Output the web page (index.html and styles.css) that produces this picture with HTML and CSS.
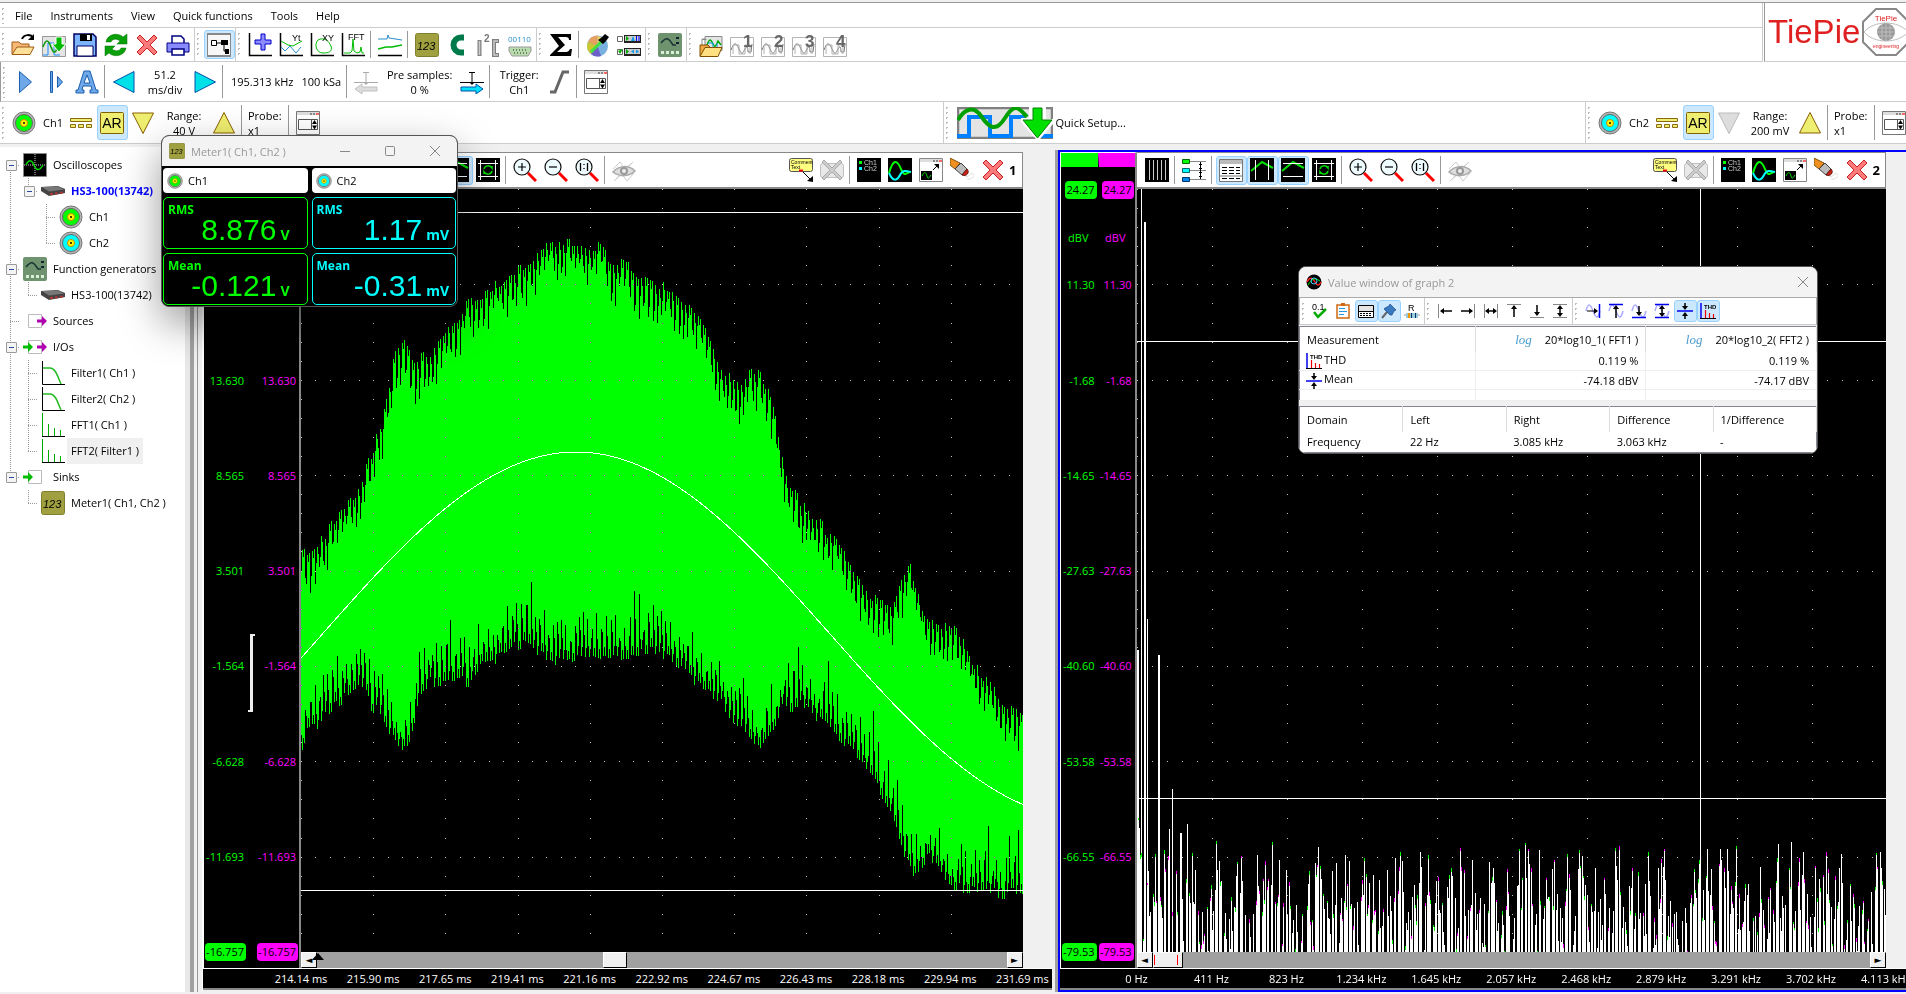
FILE: index.html
```html
<!DOCTYPE html>
<html lang="en">

<head>
    <meta charset="UTF-8">
    <meta name="viewport" content="width=device-width, initial-scale=1.0">
    <title>Multi Channel</title>
    <link rel="stylesheet" href="styles.css">
</head>

<body>
    <!-- icon set -->
    <svg class="defs" aria-hidden="true">
        <symbol id="open" viewBox="0 0 24 24">
            <path d="M1 21V9h7l2 2h8v4" fill="#f8b878" stroke="#a05a10" />
            <path d="M1 21.500L6 14h17l-4 7.500z" fill="#fde09a" stroke="#a05a10" />
            <path d="M11 6c2-5 9-5 11-1" fill="none" stroke="#000" stroke-width="2" />
            <path d="M23 1v6h-6z" />
        </symbol>
        <symbol id="quick" viewBox="0 0 24 24">
            <path d="M.5 3.500h23v20H.5z" fill="#e4e4e4" stroke="#999" />
            <path d="M1 22h5V10h6v12h6" fill="none" stroke="#1a8cff" />
            <path d="M1 14c3-8 5-8 8 0s5 6 7-2" fill="none" stroke="#0a9a0a" stroke-width="1.500" />
            <path d="M14 4h6v7h4l-7 8-7-8h4z" fill="#0b0" stroke="#fff" />
        </symbol>
        <symbol id="save" viewBox="0 0 24 24">
            <path d="M1 1h19l3 3v19H1z" fill="#7cb4ff" stroke="#000060" stroke-width="1.500" />
            <path d="M7 1h12v7H7z" />
            <path d="M14 2h3v5h-3z" fill="#fff" />
            <path d="M4 13h16v10H4z" fill="#fff" stroke="#000060" />
        </symbol>
        <symbol id="refresh" viewBox="0 0 24 24">
            <path d="M2 9c1-8 12-10 17-5l4-3v10H13l3-3c-4-3-8-2-9 1zM22 15c-1 8-12 10-17 5l-4 3V13h10l-3 3c4 3 8 2 9-1z" fill="#0aa00a" stroke="#087008" stroke-width=".500" />
        </symbol>
        <symbol id="cross" viewBox="0 0 24 24">
            <path d="M2 5l3-3 7 7 7-7 3 3-7 7 7 7-3 3-7-7-7 7-3-3 7-7z" fill="#ff7a7a" stroke="#c82020" />
        </symbol>
        <symbol id="print" viewBox="0 0 24 24">
            <path d="M6 10V3h9l3 3v4" fill="#fff" stroke="#000080" stroke-width="1.500" />
            <path d="M1 10h22v9H1z" fill="#8a8aff" stroke="#000080" />
            <path d="M6 16h12v6H6z" fill="#fff" stroke="#000080" stroke-width="1.500" />
        </symbol>
        <symbol id="objtree" viewBox="0 0 24 24">
            <path d="M0 1h24v22H0z" fill="#f7f7f7" stroke="#888" stroke-width="2" />
            <path d="M4.500 7.500h5v5h-5z" fill="#fff" stroke="#000" />
            <path d="M10 10h8M17 10v8h2" fill="none" stroke="#000" />
            <path d="M14 7h7v5h-7zM18 16h4v5h-4z" />
        </symbol>
        <symbol id="newgraph" viewBox="0 0 24 24">
            <path d="M1.500 0v22.500H24" fill="none" stroke="#000" stroke-width="1.500" />
            <path d="M13 1h4v6h6v4h-6v6h-4v-6H7V7h6z" fill="#8c8cff" stroke="#0000c8" />
        </symbol>
        <symbol id="yt" viewBox="0 0 24 24">
            <path d="M1.500 0v22.500H24" fill="none" stroke="#000" stroke-width="1.500" />
            <path d="M2 8l7 4 5 1 9-5" fill="none" stroke="#0b0" />
            <path d="M2 14l4 4 5-5 6 7 5-6" fill="none" stroke="#2a8fd0" />
            <text x="13" y="8" class="ic-mono">Yt</text>
        </symbol>
        <symbol id="xy" viewBox="0 0 24 24">
            <path d="M1.500 0v22.500H24" fill="none" stroke="#000" stroke-width="1.500" />
            <path d="M8 7c6-3 10 0 13 6 2 6-3 7-8 7-7 0-9-9-5-13z" fill="none" stroke="#0b0" />
            <text x="12" y="8" class="ic-mono">XY</text>
        </symbol>
        <symbol id="fftplus" viewBox="0 0 24 24">
            <path d="M1.500 0v22.500H24" fill="none" stroke="#000" stroke-width="1.500" />
            <path d="M3 20h6l2-2 1-12 1 12 3 2 3-1 1-5 1 6h2" fill="none" stroke="#0b0" />
            <text x="7" y="7" class="ic-mono">FFT</text>
        </symbol>
        <symbol id="compare" viewBox="0 0 24 24">
            <path d="M0 22.500h24" stroke="#000" stroke-width="1.500" />
            <path d="M0 6h9l1-4 1 3 13 2" fill="none" stroke="#2a8fd0" />
            <path d="M0 16l8-2 6 0 10-2" fill="none" stroke="#0b0" stroke-width="1.500" />
        </symbol>
        <symbol id="meter" viewBox="0 0 24 24">
            <rect x=".5" y=".5" width="23" height="23" rx="2" fill="#a0a040" stroke="#80802c" />
            <text x="2" y="17" class="ic-lcd">123</text>
        </symbol>
        <symbol id="cee" viewBox="0 0 24 24">
            <path d="M18 4.500h-3a7.500 7.500 0 0 0 0 15h3" fill="none" stroke="#007a4a" stroke-width="6" />
        </symbol>
        <symbol id="i2c" viewBox="0 0 24 24">
            <path d="M2.500 7v16M22 8h-5v14h5" fill="none" stroke="#808080" stroke-width="4" />
            <path d="M2.500 8v14M21 8h-4v14h4" fill="none" stroke="#ccc" stroke-width="1.500" />
            <text x="7" y="9" class="ic-num">2</text>
        </symbol>
        <symbol id="serial" viewBox="0 0 24 24">
            <text x="0" y="9" class="ic-bits">00110</text>
            <path d="M1 14h22v4l-3 5H4l-3-5z" fill="#b8dcae" stroke="#999" />
            <path d="M5 17h15M6 20h13" stroke="#222" stroke-dasharray="1 2" />
        </symbol>
        <symbol id="sigma" viewBox="0 0 24 24">
            <path d="M1 1h21v6h-2c0-3-2-3-4-3H9l7 8-8 7h9c2 0 3-1 4-3h2l-1 7H1v-1l9-9z" />
        </symbol>
        <symbol id="probe" viewBox="0 0 24 24">
            <circle cx="11.500" cy="13" r="10.500" fill="#78b0e0" />
            <path d="M11.500 13V2.500A10.500 10.500 0 0 0 2 9z" fill="#e8a060" />
            <path d="M11.500 13L2 9a10.500 10.500 0 0 0 3 12z" fill="#c8c830" />
            <path d="M11.500 13L5 21a10.500 10.500 0 0 0 10 2z" fill="#6a60c8" />
            <path d="M11.500 13V2.500l8 4z" fill="#f0d060" />
            <path d="M5 19L15 9" stroke="#3fe03f" stroke-width="3" />
            <path d="M12 7l3-2 4-4 4 3-3 4-3 3z" />
        </symbol>
        <symbol id="options" viewBox="0 0 24 24">
            <path d="M.5 3.500h5v5h-5zM.5 16.500h5v5h-5z" fill="#fff" stroke="#666" />
            <path d="M7 2h17v8H7zM7 15h17v8H7z" fill="#222" />
            <path d="M8 3h15v5H8zM8 16h15v5H8z" fill="#ccc" />
            <path d="M9 3l3 2.500L9 8zM9 16l3 2.500L9 21zM1 18l2 3 3-5" fill="#0a0" />
            <path d="M14 8l2-5 2 5zM14 18.500l3-2v4zM22 18.500l-3-2v4z" fill="#19e" />
            <path d="M19.500 3v5M22 3v5" stroke="#00f" />
        </symbol>
        <symbol id="generator" viewBox="0 0 24 24">
            <rect width="24" height="24" rx="2" fill="#6f936f" />
            <path d="M3 10c5-6 7-6 12 2h3" fill="none" stroke="#1c3434" stroke-width="1.500" />
            <path d="M18 4h3v2h-3zM18 9h3v2h-3z" fill="#123" />
            <path d="M3 18h3v3H3zM8 18h3v3H8zM13 18h3v3h-3zM18 18h3v3h-3z" fill="#d8f0d8" />
        </symbol>
        <symbol id="setups" viewBox="0 0 24 24">
            <path d="M3.500 6.500h4M6 3.500h17v14H6z" fill="#e4e4e4" stroke="#888" />
            <path d="M3 17V6h3" fill="none" stroke="#888" />
            <path d="M8 12c3-8 4-5 6-1s3 2 5-3l3 4" fill="none" stroke="#0a0" stroke-width="1.500" />
            <path d="M9 10h5v5h4v-5" fill="none" stroke="#19e" />
            <path d="M1 23V12h8l2 2" fill="#f0a840" stroke="#805000" />
            <path d="M1 23.500l5-9h17l-4 9z" fill="#ffe080" stroke="#805000" />
        </symbol>
        <symbol id="preset" viewBox="0 0 24 24">
            <path d="M.5 4.500h23v19H.5z" fill="#fff" stroke="#b4b4b4" />
            <path d="M1 17c3-8 5-8 8-1s4 4 6 0 3-2 3 3h3l1-8" fill="none" stroke="#777" />
            <path d="M3 21v-9h6v9h6v-9h5v9" fill="none" stroke="#b0b0b0" />
        </symbol>
        <symbol id="play" viewBox="0 0 24 24">
            <path d="M6.500 1.500l12 10.500-12 10.500z" fill="#6fa8e8" stroke="#1c5fae" />
        </symbol>
        <symbol id="step" viewBox="0 0 24 24">
            <path d="M6.500 1.500h2v21h-2zM13.500 6.500l5 5.500-5 5.500z" fill="#6fa8e8" stroke="#1c5fae" />
        </symbol>
        <symbol id="auto" viewBox="0 0 24 24">
            <path d="M9 1h6l6 19h2v3h-8v-3h2l-1-4H8l-1 4h2v3H1v-3h2zM12 5l-3 8h6z" fill="#6fa8e8" fill-rule="evenodd" stroke="#1c5fae" />
        </symbol>
        <symbol id="left" viewBox="0 0 24 24">
            <path d="M22 1.500v21L1.500 12z" fill="#00e0e8" stroke="#0050a8" />
        </symbol>
        <symbol id="right" viewBox="0 0 24 24">
            <path d="M2 1.500v21L22.500 12z" fill="#00e0e8" stroke="#0050a8" />
        </symbol>
        <symbol id="preleft" viewBox="0 0 24 24">
            <path d="M9 2.500h6M12 2v9M0 12.500h24M11 12h2v2h-2z" fill="#aaa" stroke="#aaa" />
            <path d="M1 19l7-5v3h15v4H8v3z" fill="#ddd" stroke="#c0c0c0" />
        </symbol>
        <symbol id="preright" viewBox="0 0 24 24">
            <path d="M9 2.500h6M12 2v9M0 12.500h24M11 12h2v2h-2z" fill="#000" stroke="#000" />
            <path d="M23 19l-7-5v3H1v4h15v3z" fill="#00e0ff" stroke="#0050a8" />
        </symbol>
        <symbol id="slope" viewBox="0 0 24 24">
            <path d="M3 22h5l8-20h6" fill="none" stroke="#666" stroke-width="3" />
        </symbol>
        <symbol id="window" viewBox="0 0 24 24">
            <path d="M.5.500h23v23H.5z" fill="#fff" stroke="#777" />
            <path d="M1 1h22v3H1z" fill="#ddd" />
            <path d="M14 2h2v2h-2zM17 2h2v2h-2z" fill="#888" />
            <path d="M20 2h3v2h-3z" fill="#f66" />
            <path d="M2.500 8.500h19v10h-19zM15.500 8v10" fill="none" stroke="#555" />
            <path d="M16 13l2.500-4 2.500 4zM16 14.500l2.500 4 2.500-4z" />
        </symbol>
        <symbol id="ch1" viewBox="0 0 24 24">
            <circle cx="12" cy="12" r="11" fill="#b4b4b4" stroke="#777" />
            <circle cx="12" cy="12" r="8.500" fill="#0f0" stroke="#666" />
            <circle cx="12" cy="12" r="3.500" fill="#ff0" stroke="#cc8800" />
            <circle cx="12" cy="12" r="1" />
        </symbol>
        <symbol id="ch2" viewBox="0 0 24 24">
            <circle cx="12" cy="12" r="11" fill="#b4b4b4" stroke="#777" />
            <circle cx="12" cy="12" r="8.500" fill="#0ff" stroke="#666" />
            <circle cx="12" cy="12" r="3.500" fill="#ff0" stroke="#cc8800" />
            <circle cx="12" cy="12" r="1" />
        </symbol>
        <symbol id="dc" viewBox="0 0 24 24">
            <path d="M1.500 7.500h21v3h-21zM1.500 13.500h5v3h-5zM9.500 13.500h5v3h-5zM17.500 13.500h5v3h-5z" fill="#eeee70" stroke="#8a6a10" />
        </symbol>
        <symbol id="ar" viewBox="0 0 24 24">
            <rect x=".5" y="1.500" width="23" height="21" rx="1" fill="#eeee70" stroke="#806000" />
            <text x="12" y="17" text-anchor="middle" class="ic-ar">AR</text>
        </symbol>
        <symbol id="down" viewBox="0 0 24 24">
            <path d="M1.500 2h21L12 22.500z" fill="#eeee70" stroke="#8a6000" />
        </symbol>
        <symbol id="downoff" viewBox="0 0 24 24">
            <path d="M1.500 2h21L12 22.500z" fill="#ddd" stroke="#bbb" />
        </symbol>
        <symbol id="up" viewBox="0 0 24 24">
            <path d="M1.500 22h21L12 1.500z" fill="#eeee70" stroke="#8a6000" />
        </symbol>
        <symbol id="setup" viewBox="0 0 96 32">
            <path d="M1 1h94v30H1z" fill="#e4e4e4" stroke="#808080" stroke-width="2.500" />
            <path d="M0 29h12V10h21v19h21V10h12l14 19h16" fill="none" stroke="#0080ff" stroke-width="4" />
            <path d="M1 13C8 1 17-1 24 9s14 18 24 2S62 1 70 10" fill="none" stroke="#00a000" stroke-width="4" />
            <path d="M72 0h17v12h7v5L83 32h-4L64 15v-4h8z" fill="#fff" />
            <path d="M76 1h9v12h10L80.500 31 66 13h10z" fill="#00e000" stroke="#008000" />
        </symbol>
        <symbol id="bars" viewBox="0 0 24 24">
            <path d="M0 0h24v24H0z" />
            <path d="M4.500 2v20M8.500 2v20M12.500 2v20M16.500 2v20M20.500 2v20" stroke="#ccc" />
        </symbol>
        <symbol id="align" viewBox="0 0 24 24">
            <path d="M8 3.500h16M8 12.500h16M8 21.500h16" stroke="#888" />
            <path d="M.5 1.500h7v4h-7z" fill="#0f0" stroke="#060" />
            <path d="M.5 10.500h7v4h-7z" fill="#0ff" stroke="#066" />
            <path d="M.5 19.500h7v4h-7z" fill="#08e" stroke="#036" />
            <path d="M18.500 4v17M17 6.500h3M17 10.500h3M17 14.500h3M17 18.500h3" stroke="#000" />
        </symbol>
        <symbol id="valuewin" viewBox="0 0 24 24">
            <path d="M.5 1.500h23v22H.5z" fill="#fff" stroke="#777" />
            <path d="M1 2h22v4H1z" fill="#bbb" />
            <path d="M3 9.500h18M3 12.500h18M3 15.500h18M3 20.500h18" stroke="#000" stroke-dasharray="5 2" />
            <path d="M0 18h24" stroke="#777" />
        </symbol>
        <symbol id="vcur" viewBox="0 0 24 24">
            <path d="M0 0h24v24H0z" />
            <path d="M1 13L12 4l11 6" fill="none" stroke="#0d0" stroke-width="2" />
            <path d="M5.500 2v20M18.500 2v20" stroke="#fff" />
        </symbol>
        <symbol id="hcur" viewBox="0 0 24 24">
            <path d="M0 0h24v24H0z" />
            <path d="M1 13L12 4l11 6" fill="none" stroke="#0d0" stroke-width="2" />
            <path d="M2 5.500h20M2 18.500h20" stroke="#fff" />
        </symbol>
        <symbol id="rcur" viewBox="0 0 24 24">
            <path d="M0 0h24v24H0z" />
            <path d="M2 5.500h20M2 18.500h20M4.500 2v20M19.500 2v20" stroke="#fff" />
            <path d="M8 11c1-4 6-4 8-1V8M16 13c-1 4-6 4-8 1v2" fill="none" stroke="#0d0" stroke-width="1.500" />
        </symbol>
        <symbol id="lens" viewBox="0 0 24 24">
            <path d="M15 15l8 8" stroke="#f00" stroke-width="3" />
            <circle cx="9" cy="9" r="8" fill="#eefcff" stroke="#111" stroke-width="1.200" />
        </symbol>
        <symbol id="zin" viewBox="0 0 24 24">
            <use href="#lens" />
            <path d="M5 9h8M9 5v8" stroke="#000" stroke-width="1.200" />
        </symbol>
        <symbol id="zout" viewBox="0 0 24 24">
            <use href="#lens" />
            <path d="M5 9h8" stroke="#000" stroke-width="1.200" />
        </symbol>
        <symbol id="zone" viewBox="0 0 24 24">
            <use href="#lens" />
            <path d="M5.500 5v8M12.500 5v8M9 6v1M9 10v1" stroke="#000" stroke-width="1.300" />
        </symbol>
        <symbol id="eye" viewBox="0 0 24 24">
            <path d="M1 11L8 4l5 7 8-7M2 23l8-7 5 7 7-8M4 21L21 4" fill="none" stroke="#ccc" />
            <path d="M1 14c6-7 16-7 22-1-6 6-16 6-22 1z" fill="#ddd" stroke="#aaa" stroke-width="1.500" />
            <circle cx="12" cy="13" r="4" fill="#999" />
            <circle cx="12" cy="13" r="2" fill="#eee" />
        </symbol>
        <symbol id="comment" viewBox="0 0 24 24">
            <rect x=".5" y=".5" width="23" height="13" rx="2" fill="#ffff80" stroke="#555" />
            <text x="2" y="6" class="ic-tiny">Comment</text>
            <text x="2" y="11" class="ic-tiny">Text</text>
            <path d="M10 12.500h4" stroke="#f00" stroke-width="2" />
            <path d="M14 14l8 8" stroke="#000" />
            <path d="M24 24v-6l-6 5z" />
        </symbol>
        <symbol id="nocomment" viewBox="0 0 24 24">
            <rect x=".5" y="5.500" width="23" height="14" rx="2" fill="#e8e8e8" stroke="#c0c0c0" />
            <path d="M2 4l2-2 8 8 8-8 2 2-8 8 8 8-2 2-8-8-8 8-2-2 8-8z" fill="#ccc" stroke="#aaa" />
        </symbol>
        <symbol id="legend" viewBox="0 0 24 24">
            <path d="M0 0h24v24H0z" />
            <path d="M2 3h3v3H2z" fill="#0f0" />
            <path d="M2 9h3v3H2z" fill="#0ff" />
            <text x="7" y="7" class="ic-leg">Ch1</text>
            <text x="7" y="13" class="ic-leg">Ch2</text>
        </symbol>
        <symbol id="traces" viewBox="0 0 24 24">
            <path d="M0 0h24v24H0z" />
            <path d="M1 15c4-14 8-14 12-4s6 2 10 3" fill="none" stroke="#0f0" stroke-width="2" />
            <path d="M1 15c4 9 8 8 11 2s7-4 11-3" fill="none" stroke="#0ff" stroke-width="2" />
        </symbol>
        <symbol id="float" viewBox="0 0 24 24">
            <path d="M.5.500h23v23H.5z" fill="#fff" stroke="#888" />
            <path d="M1 1h22v3H1z" fill="#ddd" />
            <path d="M14 2h2v2h-2zM17 2h2v2h-2z" fill="#888" />
            <path d="M20 2h3v2h-3z" fill="#f66" />
            <path d="M2 13h11v9H2z" />
            <path d="M3 18c2-5 4-4 5 0s2 2 4-1" fill="none" stroke="#0d0" />
            <path d="M14 12l5-5" stroke="#000" />
            <path d="M20 6v5l-5-5z" />
        </symbol>
        <symbol id="eraser" viewBox="0 0 24 24">
            <path d="M0 0l10 5-5 6-5-4z" fill="#f09020" stroke="#805010" />
            <path d="M5 11l6-6 6 6-5 6z" fill="#bbb" stroke="#444" />
            <path d="M12 17l5-6c3 3 0 8-5 6z" fill="#d02010" stroke="#601010" />
            <path d="M15 19c5 0 5-5 8-3s-2 6-6 5" fill="none" stroke="#ddd" />
        </symbol>
        <symbol id="scope" viewBox="0 0 24 24">
            <path d="M.5.500h23v23H.5z" stroke="#888" />
            <path d="M12 1v22M1 12h22" stroke="#ccc" stroke-dasharray="1 1" />
            <path d="M3 12c3-6 6-5 8 0s5 7 9 0" fill="none" stroke="#0d0" stroke-width="1.500" />
        </symbol>
        <symbol id="device" viewBox="0 0 24 24">
            <path d="M0 8l17-1 7 3v4L8 17l-8-5z" fill="#444" />
            <path d="M1 8l16-.500 6 3-15 2z" fill="#777" />
            <path d="M9 15l14-1.500" stroke="#a33" stroke-width="2" stroke-dasharray="3 2" />
        </symbol>
        <symbol id="source" viewBox="0 0 24 24">
            <path d="M5.500 5.500h13v13h-13z" fill="#fff" stroke="#bbb" />
            <path d="M14 10.500h5V7l5 5-5 5v-3.500h-5z" fill="#b000b0" />
        </symbol>
        <symbol id="sink" viewBox="0 0 24 24">
            <path d="M5.500 5.500h13v13h-13z" fill="#fff" stroke="#bbb" />
            <path d="M0 10.500h5V7l5 5-5 5v-3.500H0z" fill="#0b0" />
        </symbol>
        <symbol id="io" viewBox="0 0 24 24">
            <use href="#source" />
            <path d="M0 10.500h5V7l5 5-5 5v-3.500H0z" fill="#0b0" />
        </symbol>
        <symbol id="filter" viewBox="0 0 24 24">
            <path d="M1 7h8c6 0 8 10 11 16" fill="none" stroke="#2b2" stroke-width="1.500" />
            <path d="M1.500 0v23.500H24" fill="none" stroke="#000" />
        </symbol>
        <symbol id="fft" viewBox="0 0 24 24">
            <path d="M1.500 0v23M7.500 11v12M13.500 15v8M19.500 17v6" stroke="#0a0" />
            <path d="M1 23.500h23" stroke="#000" />
        </symbol>
        <symbol id="gauge" viewBox="0 0 16 16">
            <circle cx="8" cy="8" r="7.500" />
            <path d="M1 8c3-6 6-4 8 0s4 4 6 0" fill="none" stroke="#f22" stroke-width="1.500" />
            <path d="M2 11c4-6 6-8 12-4" fill="none" stroke="#0e0" />
            <circle cx="8" cy="7" r="3" fill="none" stroke="#4cf" />
        </symbol>
        <symbol id="v-ok" viewBox="0 0 16 16">
            <text x="0" y="7" class="ic-v">0.1</text>
            <path d="M2 9l4 5 8-8" fill="none" stroke="#0a0" stroke-width="2.500" />
        </symbol>
        <symbol id="v-copy" viewBox="0 0 16 16">
            <path d="M2 2h12v13H2z" fill="#fff" stroke="#d06a10" stroke-width="1.500" />
            <path d="M6 0h4v3H6z" fill="#d06a10" />
            <path d="M4 5.500h6M4 8.500h8M4 11.500h5" stroke="#29d" />
        </symbol>
        <symbol id="v-table" viewBox="0 0 16 16">
            <path d="M.5 2.500h15v12H.5z" fill="#fff" stroke="#000" />
            <path d="M1 3h14v5H1z" fill="#e4e4e4" />
            <path d="M1 8.500h14" stroke="#000" />
            <path d="M2 10.500h12M2 12.500h12" stroke="#000" stroke-dasharray="2 1" />
        </symbol>
        <symbol id="v-pin" viewBox="0 0 16 16">
            <path d="M1 15l5-6" stroke="#666" stroke-width="2" />
            <path d="M9 1l6 6-2 1-2 4-2 0-6-6 1-1 4-2z" fill="#3a78c0" stroke="#1a4a88" stroke-width=".700" />
        </symbol>
        <symbol id="v-res" viewBox="0 0 16 16">
            <text x="4" y="8" class="ic-v">R</text>
            <path d="M0 12h16" stroke="#999" />
            <path d="M2 10h12v5H2z" fill="#9cd" />
            <path d="M4 10h2v5H4z" fill="#e90" />
            <path d="M7.500 10v5M11.500 10v5" stroke="#036" />
        </symbol>
        <symbol id="v-l" viewBox="0 0 16 16">
            <path d="M1.500 1v14" stroke="#888" />
            <path d="M4 8h11" stroke="#000" stroke-width="1.500" />
            <path d="M3 8l4-3v6z" />
        </symbol>
        <symbol id="v-r" viewBox="0 0 16 16">
            <path d="M14.500 1v14" stroke="#888" />
            <path d="M1 8h11" stroke="#000" stroke-width="1.500" />
            <path d="M13 8L9 5v6z" />
        </symbol>
        <symbol id="v-lr" viewBox="0 0 16 16">
            <path d="M1.500 1v14M14.500 1v14" stroke="#888" />
            <path d="M4 8h8" stroke="#000" stroke-width="1.500" />
            <path d="M2 8l4-3v6zM14 8l-4-3v6z" />
        </symbol>
        <symbol id="v-t" viewBox="0 0 16 16">
            <path d="M1 1.500h14" stroke="#888" />
            <path d="M8 4v10" stroke="#000" stroke-width="1.500" />
            <path d="M8 2L5 6h6z" />
        </symbol>
        <symbol id="v-b" viewBox="0 0 16 16">
            <path d="M1 14.500h14" stroke="#888" />
            <path d="M8 2v10" stroke="#000" stroke-width="1.500" />
            <path d="M8 13L5 9h6z" />
        </symbol>
        <symbol id="v-tb" viewBox="0 0 16 16">
            <path d="M1 1.500h14M1 14.500h14" stroke="#888" />
            <path d="M8 4v8" stroke="#000" stroke-width="1.500" />
            <path d="M8 2L5 6h6zM8 14l-3-4h6z" />
        </symbol>
        <symbol id="v-wave" viewBox="0 0 16 16">
            <path d="M1 8c2-8 4-8 7 0s5 8 7 0" fill="none" stroke="#aaf" stroke-width="1.500" />
        </symbol>
        <symbol id="v-wr" viewBox="0 0 16 16">
            <use href="#v-wave" />
            <path d="M14.500 1v14" stroke="#00e" stroke-width="1.500" />
            <path d="M2 8h9" stroke="#000" />
            <path d="M13 8L9 5v6z" />
        </symbol>
        <symbol id="v-wt" viewBox="0 0 16 16">
            <use href="#v-wave" />
            <path d="M1 1.500h14" stroke="#00e" stroke-width="1.500" />
            <path d="M8 4v11" stroke="#000" stroke-width="1.500" />
            <path d="M8 2L5 6h6z" />
        </symbol>
        <symbol id="v-wb" viewBox="0 0 16 16">
            <use href="#v-wave" />
            <path d="M1 14.500h14" stroke="#00e" stroke-width="1.500" />
            <path d="M8 3v9" stroke="#000" stroke-width="1.500" />
            <path d="M8 13l-3-4h6z" />
        </symbol>
        <symbol id="v-wtb" viewBox="0 0 16 16">
            <use href="#v-wave" />
            <path d="M1 1.500h14M1 14.500h14" stroke="#00e" stroke-width="1.500" />
            <path d="M8 4v8" stroke="#000" stroke-width="1.500" />
            <path d="M8 2L5 6h6zM8 14l-3-4h6z" />
        </symbol>
        <symbol id="v-mean" viewBox="0 0 16 16">
            <path d="M0 8h16" stroke="#00e" stroke-width="1.500" />
            <path d="M8 0v4M8 12v4" stroke="#000" stroke-width="1.500" />
            <path d="M8 7L5 3h6zM8 9l-3 4h6z" />
        </symbol>
        <symbol id="v-thd" viewBox="0 0 16 16">
            <path d="M1 0v15.500" stroke="#00e" stroke-width="1.500" />
            <path d="M5.500 7v8M9.500 10v5M13.500 11v4" stroke="#e00" stroke-width="1.200" />
            <path d="M0 15.500h16" stroke="#000" />
            <text x="4" y="6" class="ic-thd">THD</text>
        </symbol>
    </svg>

    <header class="top">
        <div class="bars">
            <nav class="menubar">
                <span class="grip"></span>
                <button>File</button>
                <button>Instruments</button>
                <button>View</button>
                <button>Quick functions</button>
                <button>Tools</button>
                <button>Help</button>
            </nav>
            <div class="toolbar main-tools">
                <div class="group">
                    <span class="grip"></span>
                    <button class="tool" aria-label="Open"><svg><use href="#open" /></svg></button>
                    <button class="tool" aria-label="Quick setup"><svg><use href="#quick" /></svg></button>
                    <button class="tool" aria-label="Save"><svg><use href="#save" /></svg></button>
                    <button class="tool" aria-label="Refresh"><svg><use href="#refresh" /></svg></button>
                    <button class="tool" aria-label="Delete"><svg><use href="#cross" /></svg></button>
                    <button class="tool" aria-label="Print"><svg><use href="#print" /></svg></button>
                </div>
                <div class="group">
                    <span class="grip"></span>
                    <button class="tool pressed" aria-label="Object tree"><svg><use href="#objtree" /></svg></button>
                </div>
                <div class="group">
                    <span class="grip"></span>
                    <button class="tool" aria-label="New graph"><svg><use href="#newgraph" /></svg></button>
                    <button class="tool" aria-label="Yt graph"><svg><use href="#yt" /></svg></button>
                    <button class="tool" aria-label="XY graph"><svg><use href="#xy" /></svg></button>
                    <button class="tool" aria-label="FFT graph"><svg><use href="#fftplus" /></svg></button>
                    <span class="sep"></span>
                    <button class="tool" aria-label="References"><svg><use href="#compare" /></svg></button>
                    <span class="sep"></span>
                    <button class="tool" aria-label="Meter"><svg><use href="#meter" /></svg></button>
                    <button class="tool" aria-label="CAN"><svg><use href="#cee" /></svg></button>
                    <button class="tool" aria-label="I2C"><svg><use href="#i2c" /></svg></button>
                    <button class="tool" aria-label="Serial"><svg><use href="#serial" /></svg></button>
                </div>
                <div class="group">
                    <span class="grip"></span>
                    <button class="tool" aria-label="Math"><svg><use href="#sigma" /></svg></button>
                    <span class="sep"></span>
                    <button class="tool" aria-label="Colors"><svg><use href="#probe" /></svg></button>
                    <button class="tool" aria-label="Toolbars"><svg><use href="#options" /></svg></button>
                </div>
                <div class="group">
                    <span class="grip"></span>
                    <button class="tool" aria-label="Generator"><svg><use href="#generator" /></svg></button>
                </div>
                <div class="group last">
                    <span class="grip"></span>
                    <button class="tool" aria-label="Setups"><svg><use href="#setups" /></svg></button>
                    <button class="tool" aria-label="Setup 1"><svg viewBox="0 0 24 24"><use href="#preset" /><text x="13" y="14" class="ic-big">1</text></svg></button>
                    <button class="tool" aria-label="Setup 2"><svg viewBox="0 0 24 24"><use href="#preset" /><text x="13" y="14" class="ic-big">2</text></svg></button>
                    <button class="tool" aria-label="Setup 3"><svg viewBox="0 0 24 24"><use href="#preset" /><text x="13" y="14" class="ic-big">3</text></svg></button>
                    <button class="tool" aria-label="Setup 4"><svg viewBox="0 0 24 24"><use href="#preset" /><text x="13" y="14" class="ic-big">4</text></svg></button>
                </div>
            </div>
        </div>
        <a class="logo" href="#">TiePie
            <svg viewBox="0 0 48 48">
                <path d="M14 1h20l13 13v20L34 47H14L1 34V14z" fill="#fff" stroke="#888" stroke-width="2" />
                <path d="M2 24c10-12 34-12 44 0-10 12-34 12-44 0z" fill="none" stroke="#bbb" />
                <circle cx="24" cy="24" r="9" fill="#999" />
                <path d="M16 20h16M15 24h18M16 28h16M20 16v16M24 15v18M28 16v16" stroke="#ccc" stroke-width=".700" />
                <text x="24" y="13" text-anchor="middle" class="logo-a">TiePie</text>
                <text x="24" y="40" text-anchor="middle" class="logo-b">engineering</text>
            </svg>
        </a>
    </header>

    <div class="toolbar timebase">
        <span class="grip"></span>
        <button class="tool" aria-label="Start"><svg><use href="#play" /></svg></button>
        <button class="tool" aria-label="One shot"><svg><use href="#step" /></svg></button>
        <button class="tool" aria-label="Auto setup"><svg><use href="#auto" /></svg></button>
        <span class="sep"></span>
        <button class="tool" aria-label="Slower"><svg><use href="#left" /></svg></button>
        <button class="label w50">51.2<br>ms/div</button>
        <button class="tool" aria-label="Faster"><svg><use href="#right" /></svg></button>
        <span class="sep"></span>
        <button class="label plain">195.313 kHz</button>
        <button class="label plain">100 kSa</button>
        <span class="sep"></span>
        <button class="tool" aria-label="Less pre samples"><svg><use href="#preleft" /></svg></button>
        <button class="label w75">Pre samples:<br>0 %</button>
        <button class="tool" aria-label="More pre samples"><svg><use href="#preright" /></svg></button>
        <span class="sep"></span>
        <button class="label w50">Trigger:<br>Ch1</button>
        <button class="tool" aria-label="Slope"><svg><use href="#slope" /></svg></button>
        <span class="sep"></span>
        <button class="tool" aria-label="Trigger window"><svg><use href="#window" /></svg></button>
    </div>

    <div class="channels">
        <div class="toolbar channel">
            <span class="grip"></span>
            <button class="tool" aria-label="Channel 1"><svg><use href="#ch1" /></svg></button>
            <button class="label name">Ch1</button>
            <button class="tool" aria-label="Coupling"><svg><use href="#dc" /></svg></button>
            <button class="tool pressed" aria-label="Auto range"><svg><use href="#ar" /></svg></button>
            <button class="tool" aria-label="Range down"><svg><use href="#down" /></svg></button>
            <button class="label w50">Range:<br>40 V</button>
            <button class="tool" aria-label="Range up"><svg><use href="#up" /></svg></button>
            <span class="sep"></span>
            <button class="label probe">Probe:<br>x1</button>
            <span class="sep"></span>
            <button class="tool" aria-label="Channel window"><svg><use href="#window" /></svg></button>
        </div>
        <div class="toolbar channel">
            <span class="grip"></span>
            <button class="quick"><svg><use href="#setup" /></svg>Quick Setup...</button>
        </div>
        <div class="toolbar channel last">
            <span class="grip"></span>
            <button class="tool" aria-label="Channel 2"><svg><use href="#ch2" /></svg></button>
            <button class="label name">Ch2</button>
            <button class="tool" aria-label="Coupling"><svg><use href="#dc" /></svg></button>
            <button class="tool pressed" aria-label="Auto range"><svg><use href="#ar" /></svg></button>
            <button class="tool" aria-label="Range down" disabled><svg><use href="#downoff" /></svg></button>
            <button class="label w50">Range:<br>200 mV</button>
            <button class="tool" aria-label="Range up"><svg><use href="#up" /></svg></button>
            <span class="sep"></span>
            <button class="label probe">Probe:<br>x1</button>
            <span class="sep"></span>
            <button class="tool" aria-label="Channel window"><svg><use href="#window" /></svg></button>
        </div>
    </div>

    <main class="work">
        <aside class="tree">
            <div class="row"><i class="g start exp"></i><svg><use href="#scope" /></svg><span>Oscilloscopes</span></div>
            <div class="row"><i class="g line"></i><i class="g end exp"></i><svg><use href="#device" /></svg><span class="active">HS3-100(13742)</span></div>
            <div class="row"><i class="g line"></i><i class="g"></i><i class="g tee"></i><svg><use href="#ch1" /></svg><span>Ch1</span></div>
            <div class="row"><i class="g line"></i><i class="g"></i><i class="g end"></i><svg><use href="#ch2" /></svg><span>Ch2</span></div>
            <div class="row"><i class="g tee exp"></i><svg><use href="#generator" /></svg><span>Function generators</span></div>
            <div class="row"><i class="g line"></i><i class="g end"></i><svg><use href="#device" /></svg><span>HS3-100(13742)</span></div>
            <div class="row"><i class="g tee"></i><svg><use href="#source" /></svg><span>Sources</span></div>
            <div class="row"><i class="g tee exp"></i><svg><use href="#io" /></svg><span>I/Os</span></div>
            <div class="row"><i class="g line"></i><i class="g tee"></i><svg><use href="#filter" /></svg><span>Filter1( Ch1 )</span></div>
            <div class="row"><i class="g line"></i><i class="g tee"></i><svg><use href="#filter" /></svg><span>Filter2( Ch2 )</span></div>
            <div class="row"><i class="g line"></i><i class="g tee"></i><svg><use href="#fft" /></svg><span>FFT1( Ch1 )</span></div>
            <div class="row"><i class="g line"></i><i class="g end"></i><svg><use href="#fft" /></svg><span class="selected">FFT2( Filter1 )</span></div>
            <div class="row"><i class="g end exp"></i><svg><use href="#sink" /></svg><span>Sinks</span></div>
            <div class="row"><i class="g"></i><i class="g end"></i><svg><use href="#meter" /></svg><span>Meter1( Ch1, Ch2 )</span></div>
        </aside>
        <div class="splitter"></div>

        <section class="graph graph1">
            <div class="axes">
                <ul class="axis green">
                    <li><b>23.759</b></li>
                    <li class="unit">V</li>
                    <li>18.695</li>
                    <li>13.630</li>
                    <li>8.565</li>
                    <li>3.501</li>
                    <li>-1.564</li>
                    <li>-6.628</li>
                    <li>-11.693</li>
                    <li><b>-16.757</b></li>
                </ul>
                <ul class="axis magenta">
                    <li><b>23.759</b></li>
                    <li class="unit">V</li>
                    <li>18.695</li>
                    <li>13.630</li>
                    <li>8.565</li>
                    <li>3.501</li>
                    <li>-1.564</li>
                    <li>-6.628</li>
                    <li>-11.693</li>
                    <li><b>-16.757</b></li>
                </ul>
                <i class="bracket"></i>
            </div>
            <div class="view">
                <div class="toolbar graph-tools">
                    <button class="tool" aria-label="Background"><svg><use href="#bars" /></svg></button>
                    <span class="sep"></span>
                    <button class="tool" aria-label="Axes"><svg><use href="#align" /></svg></button>
                    <span class="sep"></span>
                    <button class="tool" aria-label="Value window"><svg><use href="#valuewin" /></svg></button>
                    <button class="tool" aria-label="Vertical cursors"><svg><use href="#vcur" /></svg></button>
                    <button class="tool pressed" aria-label="Horizontal cursors"><svg><use href="#hcur" /></svg></button>
                    <button class="tool" aria-label="Reset cursors"><svg><use href="#rcur" /></svg></button>
                    <span class="sep"></span>
                    <button class="tool" aria-label="Zoom in"><svg><use href="#zin" /></svg></button>
                    <button class="tool" aria-label="Zoom out"><svg><use href="#zout" /></svg></button>
                    <button class="tool" aria-label="Zoom 1:1"><svg><use href="#zone" /></svg></button>
                    <span class="sep"></span>
                    <button class="tool" aria-label="Envelope"><svg><use href="#eye" /></svg></button>
                    <span class="fill"></span>
                    <button class="tool" aria-label="Add comment"><svg><use href="#comment" /></svg></button>
                    <button class="tool" aria-label="Remove comments"><svg><use href="#nocomment" /></svg></button>
                    <span class="sep"></span>
                    <button class="tool" aria-label="Legend"><svg><use href="#legend" /></svg></button>
                    <button class="tool" aria-label="Interpolation"><svg><use href="#traces" /></svg></button>
                    <button class="tool" aria-label="Float"><svg><use href="#float" /></svg></button>
                    <button class="tool" aria-label="Clear"><svg><use href="#eraser" /></svg></button>
                    <button class="tool" aria-label="Close graph"><svg><use href="#cross" /></svg></button>
                    <b>1</b>
                </div>
                <svg class="plot" id="plot1"></svg>
                <div class="scroll">
                    <button aria-label="Scroll left">&#9668;</button>
                    <input type="range" aria-label="Time position" min="0" max="100" value="43">
                    <button aria-label="Scroll right">&#9658;</button>
                    <i class="trigger"></i>
                </div>
            </div>
            <ul class="xaxis">
                <li>214.14 ms</li>
                <li>215.90 ms</li>
                <li>217.65 ms</li>
                <li>219.41 ms</li>
                <li>221.16 ms</li>
                <li>222.92 ms</li>
                <li>224.67 ms</li>
                <li>226.43 ms</li>
                <li>228.18 ms</li>
                <li>229.94 ms</li>
                <li>231.69 ms</li>
            </ul>
        </section>

        <section class="graph graph2">
            <div class="axes">
                <ul class="axis green">
                    <li><b>24.27</b></li>
                    <li class="unit">dBV</li>
                    <li>11.30</li>
                    <li>-1.68</li>
                    <li>-14.65</li>
                    <li>-27.63</li>
                    <li>-40.60</li>
                    <li>-53.58</li>
                    <li>-66.55</li>
                    <li><b>-79.53</b></li>
                </ul>
                <ul class="axis magenta">
                    <li><b>24.27</b></li>
                    <li class="unit">dBV</li>
                    <li>11.30</li>
                    <li>-1.68</li>
                    <li>-14.65</li>
                    <li>-27.63</li>
                    <li>-40.60</li>
                    <li>-53.58</li>
                    <li>-66.55</li>
                    <li><b>-79.53</b></li>
                </ul>
            </div>
            <div class="view">
                <div class="toolbar graph-tools">
                    <button class="tool" aria-label="Background"><svg><use href="#bars" /></svg></button>
                    <span class="sep"></span>
                    <button class="tool" aria-label="Axes"><svg><use href="#align" /></svg></button>
                    <span class="sep"></span>
                    <button class="tool pressed" aria-label="Value window"><svg><use href="#valuewin" /></svg></button>
                    <button class="tool pressed" aria-label="Vertical cursors"><svg><use href="#vcur" /></svg></button>
                    <button class="tool pressed" aria-label="Horizontal cursors"><svg><use href="#hcur" /></svg></button>
                    <button class="tool" aria-label="Reset cursors"><svg><use href="#rcur" /></svg></button>
                    <span class="sep"></span>
                    <button class="tool" aria-label="Zoom in"><svg><use href="#zin" /></svg></button>
                    <button class="tool" aria-label="Zoom out"><svg><use href="#zout" /></svg></button>
                    <button class="tool" aria-label="Zoom 1:1"><svg><use href="#zone" /></svg></button>
                    <span class="sep"></span>
                    <button class="tool" aria-label="Envelope"><svg><use href="#eye" /></svg></button>
                    <span class="fill"></span>
                    <button class="tool" aria-label="Add comment"><svg><use href="#comment" /></svg></button>
                    <button class="tool" aria-label="Remove comments"><svg><use href="#nocomment" /></svg></button>
                    <span class="sep"></span>
                    <button class="tool" aria-label="Legend"><svg><use href="#legend" /></svg></button>
                    <button class="tool" aria-label="Interpolation"><svg><use href="#traces" /></svg></button>
                    <button class="tool" aria-label="Float"><svg><use href="#float" /></svg></button>
                    <button class="tool" aria-label="Clear"><svg><use href="#eraser" /></svg></button>
                    <button class="tool" aria-label="Close graph"><svg><use href="#cross" /></svg></button>
                    <b>2</b>
                </div>
                <svg class="plot" id="plot2"></svg>
                <div class="scroll wide">
                    <button aria-label="Scroll left">&#9668;</button>
                    <input type="range" aria-label="Frequency position" min="0" max="100" value="0">
                    <button aria-label="Scroll right">&#9658;</button>
                </div>
            </div>
            <ul class="xaxis">
                <li>0 Hz</li>
                <li>411 Hz</li>
                <li>823 Hz</li>
                <li>1.234 kHz</li>
                <li>1.645 kHz</li>
                <li>2.057 kHz</li>
                <li>2.468 kHz</li>
                <li>2.879 kHz</li>
                <li>3.291 kHz</li>
                <li>3.702 kHz</li>
                <li>4.113 kHz</li>
            </ul>
        </section>
    </main>

    <section class="win meter-win">
        <div class="title">
            <svg><use href="#meter" /></svg>
            <h2>Meter1( Ch1, Ch2 )</h2>
            <button aria-label="Minimize"><svg viewBox="0 0 10 10"><path d="M0 5.500h10" /></svg></button>
            <button aria-label="Maximize"><svg viewBox="0 0 10 10"><rect x=".5" y=".5" width="9" height="9" rx="1" /></svg></button>
            <button aria-label="Close"><svg viewBox="0 0 10 10"><path d="M0 0l10 10M10 0L0 10" /></svg></button>
        </div>
        <div class="meters">
            <div class="head"><svg><use href="#ch1" /></svg>Ch1</div>
            <div class="head"><svg><use href="#ch2" /></svg>Ch2</div>
            <div class="box one"><span>RMS</span>
                <p>8.876<small>V</small></p>
            </div>
            <div class="box two"><span>RMS</span>
                <p>1.17<small>mV</small></p>
            </div>
            <div class="box one"><span>Mean</span>
                <p>-0.121<small>V</small></p>
            </div>
            <div class="box two"><span>Mean</span>
                <p>-0.31<small>mV</small></p>
            </div>
        </div>
    </section>

    <section class="win value-win">
        <div class="title">
            <svg><use href="#gauge" /></svg>
            <h2>Value window of graph 2</h2>
            <button aria-label="Close"><svg viewBox="0 0 10 10"><path d="M0 0l10 10M10 0L0 10" /></svg></button>
        </div>
        <div class="toolbar value-tools">
            <div class="group">
                <span class="grip"></span>
                <button class="tool" aria-label="Format"><svg><use href="#v-ok" /></svg></button>
                <button class="tool" aria-label="Copy"><svg><use href="#v-copy" /></svg></button>
                <button class="tool pressed" aria-label="Cursor table"><svg><use href="#v-table" /></svg></button>
                <button class="tool pressed" aria-label="Stay on top"><svg><use href="#v-pin" /></svg></button>
                <button class="tool" aria-label="Impedance"><svg><use href="#v-res" /></svg></button>
            </div>
            <div class="group">
                <span class="grip"></span>
                <button class="tool" aria-label="Left"><svg><use href="#v-l" /></svg></button>
                <button class="tool" aria-label="Right"><svg><use href="#v-r" /></svg></button>
                <button class="tool" aria-label="Width"><svg><use href="#v-lr" /></svg></button>
                <button class="tool" aria-label="Top"><svg><use href="#v-t" /></svg></button>
                <button class="tool" aria-label="Bottom"><svg><use href="#v-b" /></svg></button>
                <button class="tool" aria-label="Height"><svg><use href="#v-tb" /></svg></button>
            </div>
            <div class="group last">
                <span class="grip"></span>
                <button class="tool" aria-label="Value right"><svg><use href="#v-wr" /></svg></button>
                <button class="tool" aria-label="Maximum"><svg><use href="#v-wt" /></svg></button>
                <button class="tool" aria-label="Minimum"><svg><use href="#v-wb" /></svg></button>
                <button class="tool" aria-label="Top to bottom"><svg><use href="#v-wtb" /></svg></button>
                <button class="tool pressed" aria-label="Mean"><svg><use href="#v-mean" /></svg></button>
                <button class="tool pressed" aria-label="THD"><svg><use href="#v-thd" /></svg></button>
            </div>
        </div>
        <table class="measure">
            <thead>
                <tr>
                    <th>Measurement</th>
                    <th><em>log</em>20*log10_1( FFT1 )</th>
                    <th><em>log</em>20*log10_2( FFT2 )</th>
                </tr>
            </thead>
            <tbody>
                <tr>
                    <td><svg><use href="#v-thd" /></svg>THD</td>
                    <td>0.119 %</td>
                    <td>0.119 %</td>
                </tr>
                <tr>
                    <td><svg><use href="#v-mean" /></svg>Mean</td>
                    <td>-74.18 dBV</td>
                    <td>-74.17 dBV</td>
                </tr>
                <tr class="empty">
                    <td></td>
                    <td></td>
                    <td></td>
                </tr>
            </tbody>
        </table>
        <table class="domain">
            <thead>
                <tr>
                    <th>Domain</th>
                    <th>Left</th>
                    <th>Right</th>
                    <th>Difference</th>
                    <th>1/Difference</th>
                </tr>
            </thead>
            <tbody>
                <tr>
                    <td>Frequency</td>
                    <td>22 Hz</td>
                    <td>3.085 kHz</td>
                    <td>3.063 kHz</td>
                    <td>-</td>
                </tr>
            </tbody>
        </table>
    </section>

    <script src="plot.js"></script>
</body>

</html>
```
FILE: styles.css
```css
* {
    box-sizing: border-box;
}

body,
html {
    margin: 0;
    padding: 0;
    height: 100%;
}

body {
    display: flex;
    flex-direction: column;
    overflow: hidden;
    position: relative;
    background: #f0f0f0;
    color: #000;
    font-family: 'Open Sans', 'Noto Sans', sans-serif;
    font-size: 11px;
    line-height: 15px;
}

button {
    background: none;
    border: none;
    padding: 0;
    margin: 0;
    color: inherit;
    font: inherit;
}

ul {
    list-style: none;
    margin: 0;
    padding: 0;
}

.defs {
    display: none;
}

/* top bars */

.top {
    display: flex;
    margin-top: 2px;
    border-top: 1px solid #999;
    background: #fff;
}

.bars {
    flex: 1;
    border-right: 1px solid #ccc;
}

.menubar {
    display: flex;
    align-items: center;
    height: 25px;
    border-bottom: 1px solid #ccc;
}

.menubar button {
    padding: 0 9px;
}

.toolbar,
.group {
    display: flex;
    align-items: center;
}

.grip {
    align-self: stretch;
    flex: none;
    width: 9px;
    margin: 3px 0;
    background: radial-gradient(circle, #bbb 1px, transparent 1px) 0 0 / 5px 5px repeat-y;
}

.menubar .grip {
    width: 6px;
}

.main-tools {
    height: 34px;
    border-bottom: 1px solid #ccc;
}

.group {
    height: 100%;
    border-right: 1px solid #ccc;
}

.group.last,
.channel.last {
    border-right: none;
}

.main-tools .group:first-child .grip {
    width: 8px;
}

.tool {
    flex: none;
    display: flex;
    align-items: center;
    justify-content: center;
    width: 31px;
    height: 29px;
    padding-right: 1px;
    border: 1px solid transparent;
    border-radius: 3px;
}

.tool svg {
    width: 24px;
    height: 24px;
}

.pressed {
    background: #cce8ff;
    border-color: #99d1ff;
}

.sep {
    flex: none;
    align-self: stretch;
    width: 1px;
    margin: 3px 4px 3px 1px;
    background: #999;
}

.logo {
    display: flex;
    align-items: center;
    width: 142px;
    margin-left: 1px;
    padding-left: 3px;
    gap: 2px;
    overflow: hidden;
    border-left: 1px solid #999;
    border-bottom: 1px solid #ccc;
    color: #e02020;
    font-family: 'Liberation Sans', sans-serif;
    font-size: 33px;
    line-height: 40px;
    text-decoration: none;
}

.logo svg {
    flex: none;
    width: 48px;
    height: 48px;
}

.logo-a {
    font: 8px 'Liberation Sans', sans-serif;
    fill: #e02020;
}

.logo-b {
    font: 5px 'Liberation Sans', sans-serif;
    fill: #e02020;
}

.timebase {
    height: 40px;
    background: #fff;
    border-left: 1px solid #999;
    border-bottom: 1px solid #ccc;
}

.label {
    flex: none;
    text-align: center;
    white-space: nowrap;
}

.w50 {
    width: 50px;
}

.w75 {
    width: 75px;
}

.plain {
    padding: 0 4px;
}

.channels {
    display: grid;
    grid-template-columns: 47fr 32fr 320px;
    height: 42px;
    background: #fff;
    border-bottom: 1px solid #ccc;
}

.channel {
    overflow: hidden;
    border-right: 1px solid #ccc;
}

.channel .pressed {
    height: 35px;
}

.name {
    width: 26px;
}

.probe {
    width: 41px;
    padding-left: 2px;
    text-align: left;
}

.quick {
    display: flex;
    align-items: center;
    gap: 3px;
    padding-left: 4px;
}

.quick svg {
    width: 96px;
    height: 32px;
}

/* text inside icons */

.ic-mono {
    font: 9px 'Liberation Sans', sans-serif;
}

.ic-lcd {
    font: italic 11px 'Liberation Sans', sans-serif;
}

.ic-num {
    font: bold 10px 'Liberation Sans', sans-serif;
    fill: #777;
}

.ic-bits {
    font: 8px 'Open Sans', sans-serif;
    fill: #2a8fd0;
}

.ic-big {
    font: bold 17px 'Liberation Sans', sans-serif;
    fill: #666;
}

.ic-ar {
    font: 14px 'Liberation Sans', sans-serif;
}

.ic-tiny {
    font: 5px 'Liberation Sans', sans-serif;
}

.ic-leg {
    font: 7px 'Liberation Sans', sans-serif;
    fill: #ccc;
}

.ic-v {
    font: 9px 'Liberation Sans', sans-serif;
}

.ic-thd {
    font: bold 6px 'Liberation Sans', sans-serif;
}

/* work area */

.work {
    flex: 1;
    display: flex;
    min-height: 0;
    padding: 6px 0 2px;
}

.tree {
    flex: none;
    width: 185px;
    margin-top: -3px;
    padding: 5px 0 0 2px;
    overflow: hidden;
    background: #fff;
}

.row {
    display: flex;
    align-items: center;
    height: 26px;
    white-space: nowrap;
}

.row svg {
    flex: none;
    width: 24px;
    height: 24px;
    margin: 0 2px 0 3px;
}

.row span {
    padding: 5px 4px 6px;
}

.row .active {
    color: #00f;
    font-weight: bold;
}

.row .selected {
    background: #f0f0f0;
}

/* dotted guides of the tree, one cell per level */
.g {
    --dots: linear-gradient(#999 50%, transparent 50%);
    --dash: linear-gradient(90deg, #999 50%, transparent 50%);
    --left: linear-gradient(#fff, #fff) 0 0 / 8px 26px no-repeat;
    flex: none;
    display: flex;
    align-items: center;
    justify-content: center;
    width: 18px;
    height: 26px;
}

.line {
    background: var(--dots) 8px 0 / 1px 2px repeat-y;
}

.tee {
    background: var(--left), var(--dash) 8px 13px / 2px 1px repeat-x, var(--dots) 8px 0 / 1px 2px repeat-y;
}

.start {
    background: linear-gradient(#fff, #fff) 0 0 / 18px 13px no-repeat, var(--left), var(--dash) 8px 13px / 2px 1px repeat-x, var(--dots) 8px 0 / 1px 2px repeat-y;
}

.end {
    background: linear-gradient(#fff, #fff) 0 14px / 18px 12px no-repeat, var(--left), var(--dash) 8px 13px / 2px 1px repeat-x, var(--dots) 8px 0 / 1px 2px repeat-y;
}

.exp::before {
    content: "";
    width: 9px;
    height: 9px;
    border: 1px solid #999;
    border-radius: 1px;
    background: linear-gradient(#2a4a9a, #2a4a9a) center / 5px 1px no-repeat, #f4f4f4;
}

.splitter {
    flex: none;
    width: 17px;
    background: linear-gradient(90deg, #e8e8e8 5px, #a0a0a0 5px, #a0a0a0 9px, #f0f0f0 9px, #f0f0f0 12px, #999 12px, #999 13px, #f0f0f0 13px);
}

.graph {
    flex: 1 1 0;
    display: grid;
    grid-template-columns: auto 1fr;
    grid-template-rows: 1fr 22px;
    min-width: 0;
    overflow: hidden;
    border: 2px solid #f0f0f0;
    border-left: 1px solid #fff;
    border-right: none;
}

.graph1 {
    flex-basis: 6px;
    padding-right: 3px;
}

.graph2 {
    margin-left: 3px;
    border: 2px solid #00f;
    border-right: none;
    outline: 3px solid #a0a0a0;
    clip-path: inset(0 0 0 -3px);
}

.axes {
    display: flex;
    position: relative;
    border-top: 1px solid #fff;
    border-left: 1px solid #fff;
    border-right: 2px solid #888;
    background: #000;
}

/* labels sit on every second row, the unit fills the row between the first two */
.axis {
    display: grid;
    grid-template-rows: repeat(17, 18px);
    align-content: space-between;
    width: 37px;
    padding: 14px 0 7px;
    border-top: 14px solid #0f0;
    text-align: right;
    line-height: 18px;
}

.graph1 .axis {
    width: 43px;
}

.graph1 .magenta {
    width: 52px;
}

.axis li {
    grid-row: span 2;
    align-self: end;
    padding-right: 3px;
}

.axis li:first-child,
.axis .unit,
.axis .unit + li {
    grid-row: span 1;
}

.axis .unit {
    padding-right: 9px;
}

.green {
    color: #0f0;
}

.magenta {
    color: #f0f;
    border-top-color: #f0f;
}

.graph2 .magenta {
    border-left: 1px solid #000;
}

.axis b {
    display: inline-block;
    margin-right: -2px;
    padding: 0 2px 0 1px;
    border-radius: 4px;
    background: #0f0;
    color: #000;
    font-weight: normal;
}

.magenta b {
    background: #f0f;
}

/* gain and offset marker of the second axis */
.bracket {
    position: absolute;
    top: 59%;
    left: 46px;
    width: 3px;
    height: 78px;
    background: #eee;
}

.bracket::before,
.bracket::after {
    content: "";
    position: absolute;
    width: 5px;
    height: 2px;
    background: #eee;
}

.bracket::before {
    left: 0;
    top: 0;
}

.bracket::after {
    right: 0;
    bottom: 0;
}

.view {
    display: flex;
    flex-direction: column;
    min-width: 0;
    margin-right: 29px;
    background: #000;
}

.graph2 .view {
    margin-right: 20px;
}

.graph-tools {
    height: 37px;
    padding: 0 5px;
    border: 1px solid #888;
    border-left: none;
    border-bottom-width: 2px;
    background: #fff;
}

.graph-tools b {
    font-size: 13px;
}

.fill {
    flex: 1;
}

.plot {
    flex: 1;
    display: block;
    width: 100%;
    min-height: 0;
    shape-rendering: crispEdges;
}

.dots {
    mix-blend-mode: difference;
}

.scroll {
    display: flex;
    position: relative;
    height: 16px;
    background: #a0a0a0;
}

.scroll button {
    width: 16px;
    height: 16px;
    border: 1px solid #fff;
    border-right-color: #000;
    border-bottom-color: #000;
    background: #f0f0f0;
    font: 9px/12px 'DejaVu Sans', sans-serif;
}

.scroll input {
    flex: 1;
    appearance: none;
    min-width: 0;
    height: 16px;
    margin: 0;
    background: #a0a0a0;
}

.scroll input::-webkit-slider-thumb {
    appearance: none;
    width: 24px;
    height: 16px;
    border: 1px solid #fff;
    border-right-color: #000;
    border-bottom-color: #000;
    background: #f0f0f0;
}

.wide input::-webkit-slider-thumb {
    width: 30px;
    background: linear-gradient(#f00, #f00) 0 2px / 1px 10px no-repeat, linear-gradient(#f00, #f00) 23px 2px / 1px 10px no-repeat, #f0f0f0;
}

.trigger {
    position: absolute;
    left: 11px;
    top: 1px;
    border: 6px solid transparent;
    border-top: none;
    border-bottom: 7px solid #000;
}

.xaxis {
    grid-column: 1 / -1;
    display: flex;
    justify-content: space-between;
    padding: 0 29px 0 98px;
    border-top: 1px solid #fff;
    border-bottom: 2px solid #888;
    background: #000;
    color: #fff;
    line-height: 20px;
}

.graph2 .xaxis {
    padding: 0 20px 0 77px;
}

.xaxis li {
    display: flex;
    justify-content: center;
    width: 0;
    white-space: nowrap;
}

/* floating windows */

.win {
    position: absolute;
    overflow: hidden;
    border: 1px solid #555;
    border-radius: 8px;
}

.title {
    display: flex;
    align-items: center;
    height: 30px;
    padding-left: 7px;
    background: #f3f3f3;
    color: #999;
}

.title > svg {
    width: 16px;
    height: 16px;
}

.title h2 {
    flex: 1;
    margin: 0 0 0 6px;
    font-size: 11px;
    font-weight: normal;
}

.title button {
    width: 45px;
    height: 30px;
}

.title button svg {
    display: block;
    width: 10px;
    height: 10px;
    margin: auto;
    fill: none;
    stroke: #888;
}

.meter-win {
    left: 161px;
    top: 135px;
    width: 297px;
    background: #000;
    box-shadow: 0 16px 40px rgba(0, 0, 0, 0.4);
}

.meters {
    display: grid;
    grid-template-columns: 1fr 1fr;
    gap: 4px;
    padding: 2px 1px 1px;
}

.head {
    display: flex;
    align-items: center;
    gap: 5px;
    height: 25px;
    padding-left: 4px;
    border-radius: 4px;
    background: #fff;
}

.head svg {
    width: 16px;
    height: 16px;
}

.box {
    height: 52px;
    padding: 4px 6px 0 4px;
    border: 1px solid;
    border-radius: 5px;
    font-weight: bold;
}

.box span {
    display: block;
    font-size: 12px;
    line-height: 16px;
}

.box p {
    display: flex;
    align-items: baseline;
    justify-content: flex-end;
    height: 24px;
    margin: 0;
    font: 30px/24px 'Liberation Sans', sans-serif;
}

.box small {
    margin-left: 4px;
    font: bold 14px/16px 'Open Sans', sans-serif;
}

.box.one {
    padding-right: 17px;
    color: #0f0;
}

.box.two {
    color: #0ff;
}

.value-win {
    left: 1298px;
    top: 266px;
    width: 520px;
    background: #f0f0f0;
}

.value-win .title button {
    width: 29px;
}

.value-tools {
    height: 28px;
    border: 1px solid #aaa;
    border-bottom-color: #ccc;
    background: #fff;
}

.value-tools .tool {
    width: 23px;
    height: 22px;
}

.value-tools svg,
.measure svg {
    width: 16px;
    height: 16px;
}

.value-win table {
    width: 100%;
    table-layout: fixed;
    border-collapse: collapse;
    border: 1px solid #828790;
    background: #fff;
}

.value-win th,
.value-win td {
    padding: 0 7px;
    text-align: left;
    font-weight: normal;
}

.value-win th {
    height: 25px;
    border-right: 1px solid #ddd;
}

.measure {
    margin: 1px 0 5px;
}

.value-win .measure th:first-child {
    width: 34%;
}

.value-win .measure th + th,
.value-win .measure td + td {
    text-align: right;
}

.value-win .measure td {
    height: 19px;
    border-right: 1px solid #eee;
    border-bottom: 1px solid #eee;
}

.value-win .measure .empty td {
    height: 11px;
}

.value-win .measure td:first-child {
    padding-left: 6px;
}

.measure svg {
    margin-right: 2px;
    vertical-align: middle;
}

.measure em {
    margin-right: 13px;
    color: #4a9ccc;
    font-family: 'Liberation Serif', serif;
    font-size: 13px;
}

.value-win .domain td {
    height: 21px;
}
```
FILE: plot.js
```javascript
// envelope of trace 1, x: 0..724, y: 0..763
const topEdge = [[0, 362], [19, 347], [39, 317], [59, 292], [79, 232], [94, 162], [104, 147], [114, 165], [129, 157], [149, 132], [169, 107], [189, 97], [209, 80], [229, 64], [249, 52], [262, 48], [279, 47], [299, 52], [309, 66], [329, 72], [349, 85], [369, 95], [389, 112], [409, 142], [424, 177], [439, 187], [459, 175], [469, 197], [479, 242], [489, 287], [504, 312], [519, 327], [539, 352], [559, 382], [579, 410], [594, 412], [604, 382], [611, 374], [619, 402], [629, 425], [648, 430], [662, 442], [679, 478], [699, 502], [724, 522]];
const bottomEdge = [[0, 564], [6, 545], [19, 540], [29, 527], [39, 519], [51, 507], [62, 502], [71, 527], [80, 528], [89, 550], [99, 572], [109, 552], [119, 511], [129, 500], [154, 497], [172, 499], [184, 480], [209, 468], [221, 460], [244, 472], [264, 479], [289, 469], [303, 475], [329, 470], [354, 468], [379, 482], [394, 497], [412, 510], [428, 528], [445, 550], [462, 568], [483, 523], [507, 523], [538, 553], [574, 596], [592, 632], [613, 695], [629, 672], [647, 699], [671, 707], [724, 712]];

let seed = 7;
function rand() {
    seed = (seed * 16807) % 2147483647;
    return seed / 2147483647;
}

function edge(points, x) {
    for (let i = 1; i < points.length; i++) {
        if (x <= points[i][0]) {
            const [x0, y0] = points[i - 1];
            const [x1, y1] = points[i];
            return y0 + (y1 - y0) * (x - x0) / (x1 - x0);
        }
    }
    return points[points.length - 1][1];
}

function add(svg, d, color, name) {
    const path = document.createElementNS('http://www.w3.org/2000/svg', 'path');
    path.setAttribute('d', d);
    path.setAttribute('stroke', color);
    path.setAttribute('fill', 'none');
    if (name) path.setAttribute('class', name);
    svg.appendChild(path);
}

function grid(svg, w, h) {
    let d = '';
    for (let i = 0; i <= 10; i++) {
        for (let j = 0; j < 40; j++) {
            d += `M${Math.round(i * w / 10)} ${Math.round(j * h / 40) + 0.5}h1`;
        }
    }
    for (let j = 1; j < 8; j++) {
        for (let i = 0; i < 50; i++) {
            d += `M${Math.round(i * w / 50)} ${Math.round(j * h / 8) + 0.5}h1`;
        }
    }
    add(svg, d, '#c0c0c0', 'dots');
}

function drawScope(svg) {
    const w = svg.clientWidth, h = svg.clientHeight;
    const sx = 724 / w, sy = h / 763;
    let d = '', phase = 0, period = 5, deepTop = 30, deepBottom = 30, tipTop = 0, tipBottom = 0;
    for (let x = 0; x < w; x++) {
        if (phase >= period) {
            phase = 0;
            period = rand() < 0.6 ? 5 : 4;
            deepTop = 16 + rand() * 26;
            deepBottom = 16 + rand() * 30 + (rand() < 0.12 ? 22 : 0);
            tipTop = rand() * 12;
            tipBottom = rand() * 12;
        }
        let y1 = edge(topEdge, x * sx) + tipTop;
        let y2 = edge(bottomEdge, x * sx) - tipBottom;
        if (phase === period - 1) {
            y1 += deepTop;
            y2 -= deepBottom;
        } else if (phase === 0) {
            y1 += deepTop * 0.7;
            y2 -= deepBottom * 0.6;
        } else if (phase === 2) {
            y1 += 8;
            y2 -= 9;
        }
        d += `M${x + 0.5} ${Math.round(y1 * sy)}V${Math.round(y2 * sy)}`;
        phase++;
    }
    add(svg, d, '#0f0');
    grid(svg, w, h);

    let wave = '';
    for (let x = 0; x <= w; x += 2) {
        const y = 263 + 183 * (1 - Math.cos(0.00615 * (x * sx - 276)));
        wave += `${x ? 'L' : 'M'}${x} ${(y * sy).toFixed(1)}`;
    }
    add(svg, wave, '#fff');
    add(svg, `M0 ${Math.round(23 * sy) + 0.5}H${w}M0 ${Math.round(701 * sy) + 0.5}H${w}`, '#fff');
}

function drawSpectrum(svg) {
    const w = svg.clientWidth, h = svg.clientHeight;
    grid(svg, w, h);
    // base frequency and its harmonics: x, top, width
    const peaks = [[0, 461, 2], [4, 0, 1], [7, 33, 2], [10, 430, 1], [21, 466, 2], [35, 600, 1], [43, 644, 2], [50, 635, 1]];
    let white = '', green = '', magenta = '';
    peaks.forEach(([x, y, n]) => {
        for (let i = 0; i < n; i++) white += `M${x + i + 0.5} ${y}V${h}`;
    });
    let x = 1;
    while (x < w) {
        const run = 2 + Math.floor(rand() * 3);
        const start = x < 60 ? 560 + x * 1.5 : 652;
        const y = start + Math.pow(rand(), 0.9) * (h - start - 30);
        const tip = Math.floor(rand() * run);
        for (let i = 0; i < run && x < w; i++, x++) {
            const top = Math.round(y + (i === tip ? 0 : 8 + rand() * 45));
            if (top >= h) continue;
            white += `M${x + 0.5} ${top}V${h}`;
            const mark = `M${x + 0.5} ${top}v${2 + Math.floor(rand() * 3)}`;
            const pick = rand();
            if (pick < 0.25) green += mark;
            else if (pick < 0.5) magenta += mark;
        }
        x += rand() < 0.7 ? 1 : 2;
    }
    add(svg, white, '#fff');
    add(svg, green, '#0f0');
    add(svg, magenta, '#f0f');
    const cur = Math.round(w * 0.75) + 0.5;
    add(svg, `M0 152.5H${w}M0 609.5H${w}M${cur} 0V${h}`, '#fff');
}

drawScope(document.getElementById('plot1'));
drawSpectrum(document.getElementById('plot2'));
```
